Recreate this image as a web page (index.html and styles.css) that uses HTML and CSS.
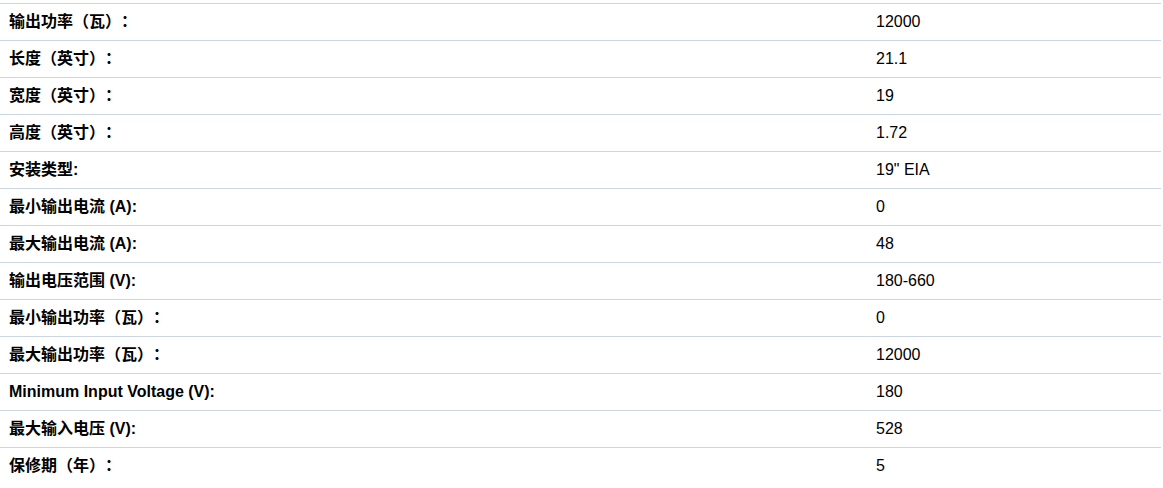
FILE: index.html
```html
<!DOCTYPE html>
<html lang="zh-CN">
<head>
    <meta charset="UTF-8">
    <title>规格参数</title>
    <link rel="stylesheet" href="styles.css">
</head>
<body>
    <table class="spec-table">
        <tbody>
            <tr><th>输出功率（瓦）：</th><td>12000</td></tr>
            <tr><th>长度（英寸）：</th><td>21.1</td></tr>
            <tr><th>宽度（英寸）：</th><td>19</td></tr>
            <tr><th>高度（英寸）：</th><td>1.72</td></tr>
            <tr><th>安装类型:</th><td>19" EIA</td></tr>
            <tr><th>最小输出电流 (A):</th><td>0</td></tr>
            <tr><th>最大输出电流 (A):</th><td>48</td></tr>
            <tr><th>输出电压范围 (V):</th><td>180-660</td></tr>
            <tr><th>最小输出功率（瓦）：</th><td>0</td></tr>
            <tr><th>最大输出功率（瓦）：</th><td>12000</td></tr>
            <tr><th>Minimum Input Voltage (V):</th><td>180</td></tr>
            <tr><th>最大输入电压 (V):</th><td>528</td></tr>
            <tr><th>保修期（年）：</th><td>5</td></tr>
        </tbody>
    </table>
</body>
</html>
```

FILE: styles.css
```css
* {
    margin: 0;
    padding: 0;
    box-sizing: border-box;
}

body {
    font-family: "Liberation Sans", Arial, "Noto Sans CJK SC", sans-serif;
    font-size: 16px;
    color: #000;
    background: #fff;
    padding-top: 3px;
}

.spec-table {
    width: 1161px;
    border-collapse: collapse;
}

.spec-table tr {
    border-top: 1px solid #ccd6e0;
}

.spec-table th,
.spec-table td {
    height: 37px;
    padding: 0 8px 0 9px;
    text-align: left;
    vertical-align: middle;
    line-height: 18px;
}

.spec-table th {
    width: 867px;
    font-weight: bold;
    text-spacing-trim: space-all;
    font-feature-settings: "palt" 0, "halt" 0;
}

.spec-table td {
    font-weight: normal;
}
```
